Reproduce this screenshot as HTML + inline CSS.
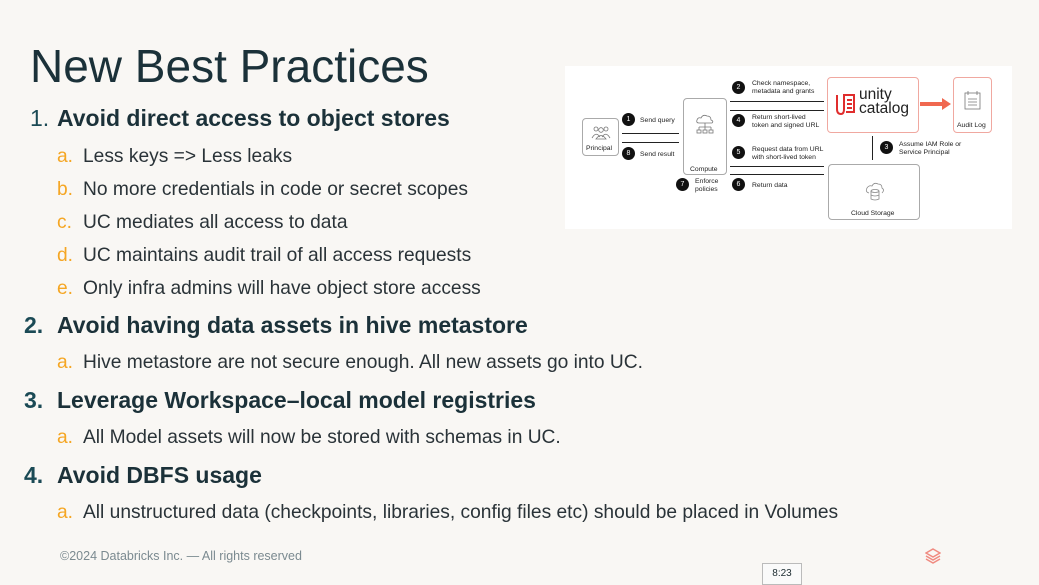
<!DOCTYPE html>
<html><head><meta charset="utf-8"><style>
body{margin:0;width:1039px;height:577px;background:#f9f7f4;font-family:"Liberation Sans",sans-serif;position:relative;overflow:hidden;color:#1b2b30}
.a{position:absolute;white-space:nowrap}
.t{left:30px;top:39px;font-size:46px;color:#1b3139}
.h{font-size:23px;font-weight:bold;color:#1b3139}
.h span{font-weight:normal;color:#1b4a55;display:inline-block;width:27px}
.h b{color:#1b4a55}
.s{font-size:19.2px;left:57px;color:#2a3338}
.s span{color:#f5a623;display:inline-block;width:26px}
.d{position:absolute;left:565px;top:66px;width:447px;height:163px;background:#fff}
.bx{position:absolute;border:1px solid #aaa;border-radius:4px;background:#fff}
.f{font-size:6.8px;color:#222;position:absolute;white-space:nowrap;line-height:8px}
.c{position:absolute;width:13px;height:13px;border-radius:50%;background:#111;color:#fff;font-size:7px;text-align:center;line-height:13px}
.ln{position:absolute;height:1px;background:#222}
</style></head><body>
<div class="a t">New Best Practices</div>
<div class="a h" style="left:30px;top:105px"><span>1.</span>Avoid direct access to object stores</div>
<div class="a s" style="top:146px"><span>a.</span>Less keys =&gt; Less leaks</div>
<div class="a s" style="top:179px"><span>b.</span>No more credentials in code or secret scopes</div>
<div class="a s" style="top:212px"><span>c.</span>UC mediates all access to data</div>
<div class="a s" style="top:245px"><span>d.</span>UC maintains audit trail of all access requests</div>
<div class="a s" style="top:278px"><span>e.</span>Only infra admins will have object store access</div>
<div class="a h" style="left:24px;top:312px"><b style="display:inline-block;width:33px">2.</b>Avoid having data assets in hive metastore</div>
<div class="a s" style="top:352px"><span>a.</span>Hive metastore are not secure enough. All new assets go into UC.</div>
<div class="a h" style="left:24px;top:387px"><b style="display:inline-block;width:33px">3.</b>Leverage Workspace–local model registries</div>
<div class="a s" style="top:427px"><span>a.</span>All Model assets will now be stored with schemas in UC.</div>
<div class="a h" style="left:24px;top:462px"><b style="display:inline-block;width:33px">4.</b>Avoid DBFS usage</div>
<div class="a s" style="top:502px"><span>a.</span>All unstructured data (checkpoints, libraries, config files etc) should be placed in Volumes</div>
<div class="a" style="left:60px;top:549px;font-size:12.5px;color:#7b8a90">©2024 Databricks Inc. — All rights reserved</div>
<svg class="a" style="left:925px;top:548px" width="16" height="16" viewBox="0 0 16 16"><path d="M8 1L15 5L8 9L1 5Z M1 8L8 12L15 8 M1 11L8 15L15 11" fill="none" stroke="#f08a80" stroke-width="1.5"/></svg>
<div class="a" style="left:762px;top:563px;width:38px;height:20px;border:1px solid #bbb;background:#fafafa;font-size:10px;text-align:center;line-height:20px">8:23</div>

<div class="d">
 <div class="bx" style="left:17px;top:52px;width:35px;height:36px"><div class="f" style="left:3px;top:26px">Principal</div>
  <svg style="position:absolute;left:8px;top:6px" width="20" height="16"><g fill="none" stroke="#777" stroke-width=".8"><circle cx="5" cy="4" r="2"/><circle cx="15" cy="4" r="2"/><circle cx="10" cy="5" r="2.3"/><path d="M1 13Q5 6 9 12M11 12Q15 6 19 13M5 14Q10 7 15 14Z"/></g></svg></div>
 <div class="bx" style="left:118px;top:32px;width:42px;height:75px"><div class="f" style="left:6px;top:67px">Compute</div>
  <svg style="position:absolute;left:10px;top:14px" width="22" height="22"><g fill="none" stroke="#777" stroke-width=".8"><path d="M5 10Q2 10 3 7Q4 4 7 5Q9 1 13 3Q17 3 17 7Q20 8 18 10Z M11 10V14M5 14H17M5 14V17M11 14V17M17 14V17"/><rect x="3" y="17" width="4" height="3"/><rect x="9" y="17" width="4" height="3"/><rect x="15" y="17" width="4" height="3"/></g></svg></div>
 <div class="bx" style="left:262px;top:11px;width:90px;height:54px;border-color:#f0a8a0">
  <svg style="position:absolute;left:7px;top:15px" width="22" height="24"><g fill="none" stroke="#e02d2d" stroke-width="2"><path d="M2 2V16Q2 21 6 21Q9 21 9 16V2H19V19H11"/><path d="M12 7H17M12 11H17M12 15H17"/></g></svg>
  <div style="position:absolute;left:31px;top:10px;font-size:15.5px;line-height:14px;color:#222">unity<br>catalog</div></div>
 <svg style="position:absolute;left:355px;top:31px" width="32" height="14"><path d="M0 5H22V1L31 7L22 13V9H0Z" fill="#f06850"/></svg>
 <div class="bx" style="left:388px;top:11px;width:37px;height:54px;border-color:#f0a8a0"><div class="f" style="left:3px;top:44px">Audit Log</div>
  <svg style="position:absolute;left:10px;top:12px" width="17" height="20"><g fill="none" stroke="#777" stroke-width=".8"><rect x="1" y="3" width="15" height="16"/><path d="M4 1V5M13 1V5M4 9H13M4 12H13M4 15H13"/></g></svg></div>
 <div class="bx" style="left:263px;top:98px;width:90px;height:54px"><div class="f" style="left:22px;top:45px">Cloud Storage</div>
  <svg style="position:absolute;left:36px;top:17px" width="20" height="20"><g fill="none" stroke="#888" stroke-width=".8"><path d="M4 11Q0 10 2 6Q4 3 7 4Q9 0 13 2Q17 2 17 6Q20 8 17 11"/><ellipse cx="10" cy="9" rx="4" ry="1.5"/><path d="M6 9V17Q10 19 14 17V9M6 13Q10 15 14 13"/></g></svg></div>
 <div class="c" style="left:57px;top:47px">1</div><div class="f" style="left:75px;top:51px">Send query</div>
 <div class="ln" style="left:57px;top:67px;width:57px"></div><div class="ln" style="left:57px;top:76px;width:57px"></div>
 <div class="c" style="left:57px;top:81px">8</div><div class="f" style="left:75px;top:85px">Send result</div>
 <div class="c" style="left:167px;top:15px">2</div><div class="f" style="left:187px;top:14px">Check namespace,<br>metadata and grants</div>
 <div class="ln" style="left:165px;top:35px;width:94px"></div><div class="ln" style="left:165px;top:44px;width:94px"></div>
 <div class="c" style="left:167px;top:48px">4</div><div class="f" style="left:187px;top:48px">Return short-lived<br>token and signed URL</div>
 <div class="c" style="left:167px;top:80px">5</div><div class="f" style="left:187px;top:80px">Request data from URL<br>with short-lived token</div>
 <div class="ln" style="left:165px;top:100px;width:94px"></div><div class="ln" style="left:165px;top:108px;width:94px"></div>
 <div class="c" style="left:167px;top:112px">6</div><div class="f" style="left:187px;top:116px">Return data</div>
 <div class="c" style="left:111px;top:112px">7</div><div class="f" style="left:130px;top:112px">Enforce<br>policies</div>
 <div style="position:absolute;left:307px;top:70px;width:1px;height:24px;background:#222"></div>
 <div class="c" style="left:315px;top:75px">3</div><div class="f" style="left:334px;top:75px">Assume IAM Role or<br>Service Principal</div>
</div>
</body></html>
